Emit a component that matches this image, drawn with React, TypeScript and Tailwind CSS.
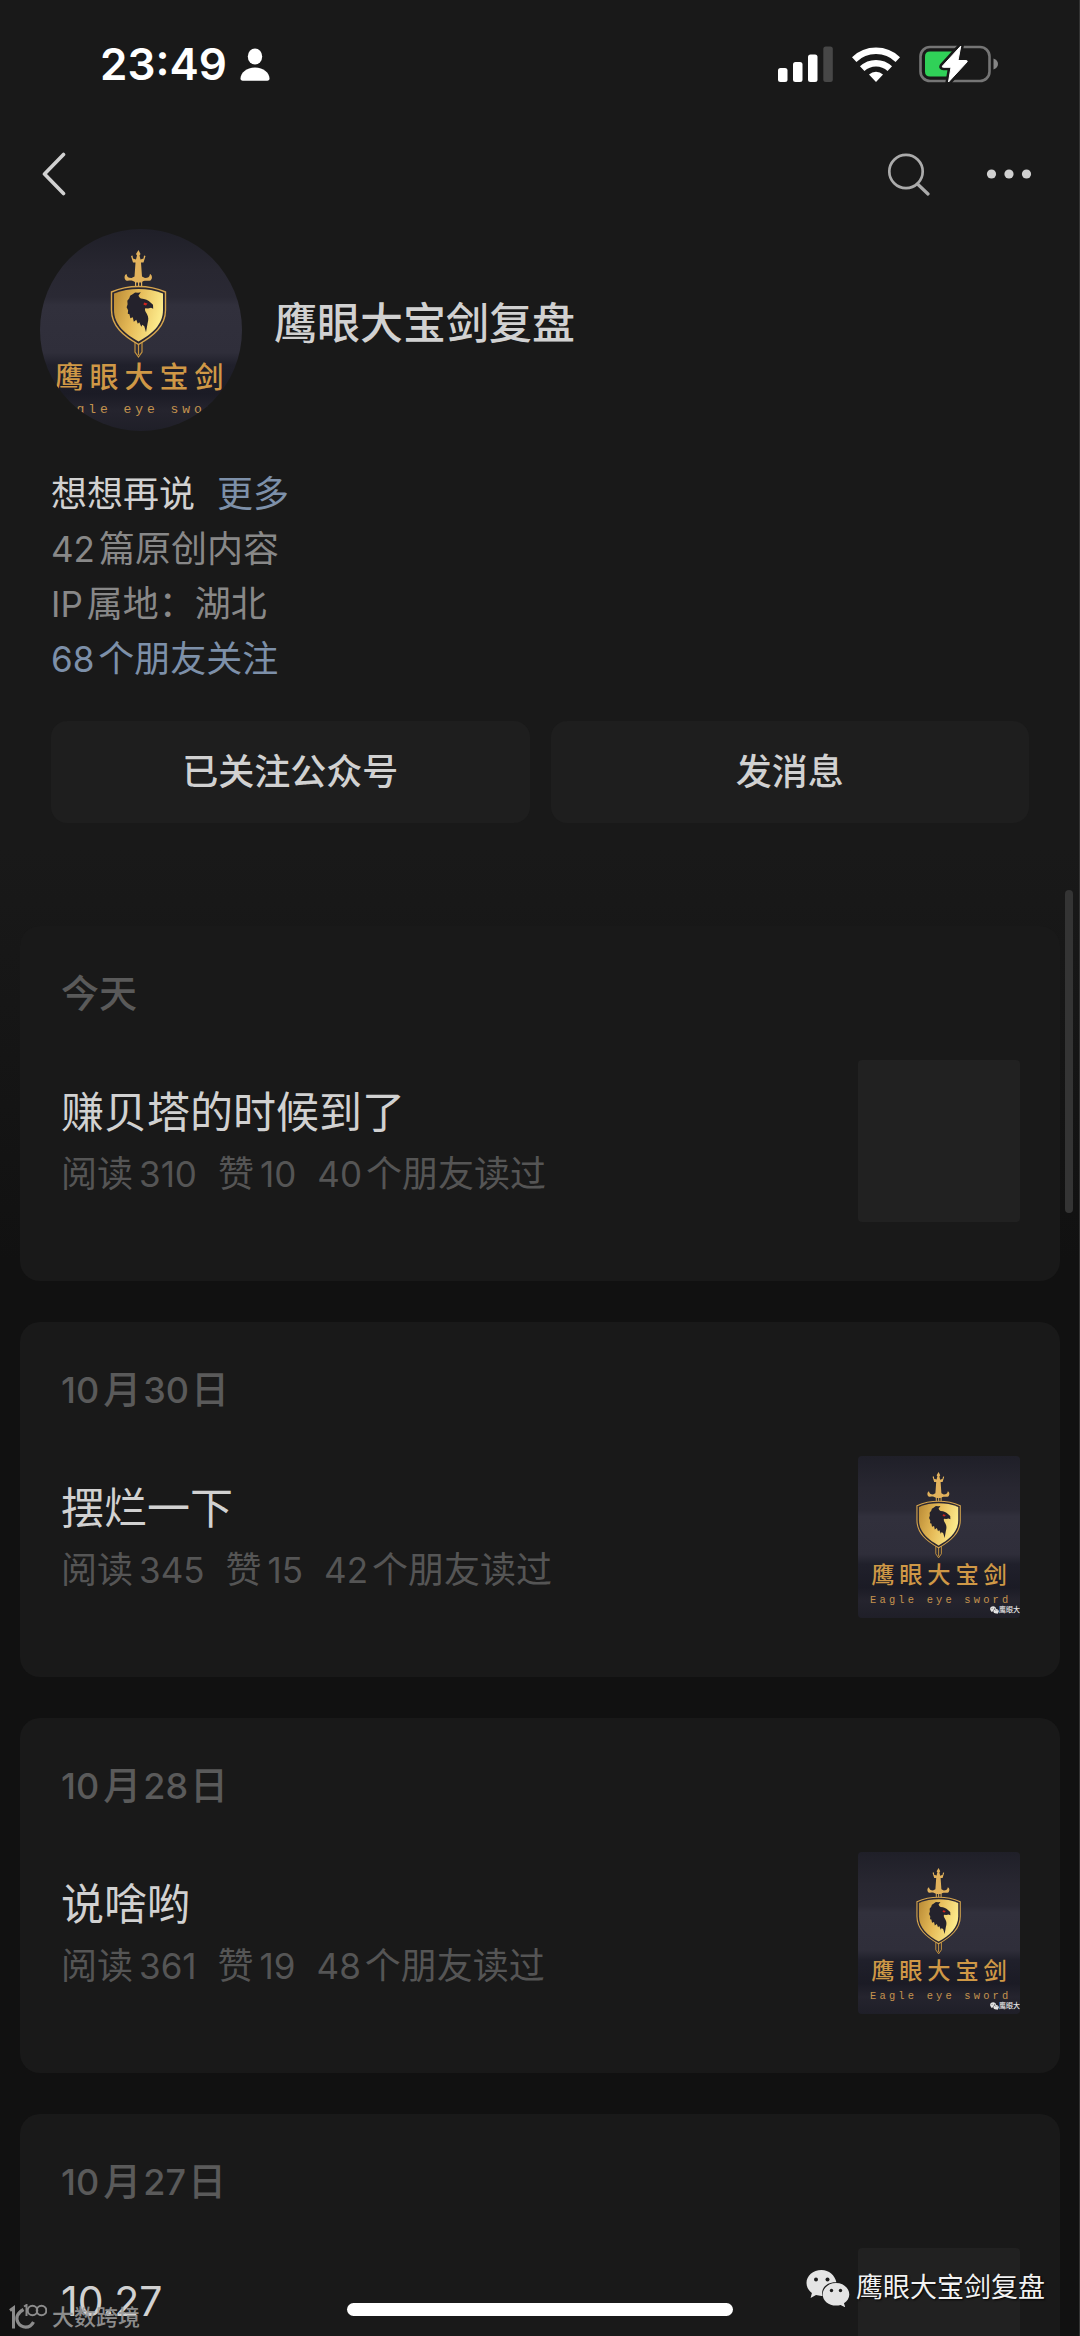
import { Fragment, type ReactNode } from "react";

type Post = {
  date: ReactNode;
  title: ReactNode;
  reads: number;
  likes: number;
  friends: number;
  cover: boolean;
};

function Num({ children }: { children: ReactNode }) {
  return <span className="text-[35px] leading-none">{children}</span>;
}

function DateLabel({ month, day }: { month: number; day: number }) {
  return (
    <>
      <span className="mr-1 text-[36px] leading-none">{month}</span>月
      <span className="mx-0.5 text-[36px] leading-none">{day}</span>日
    </>
  );
}

const posts: Post[] = [
  { date: "今天", title: "赚贝塔的时候到了", reads: 310, likes: 10, friends: 40, cover: false },
  { date: <DateLabel month={10} day={30} />, title: "摆烂一下", reads: 345, likes: 15, friends: 42, cover: true },
  { date: <DateLabel month={10} day={28} />, title: "说啥哟", reads: 361, likes: 19, friends: 48, cover: true },
  {
    date: <DateLabel month={10} day={27} />,
    title: <span className="text-[41px] leading-none">10.27</span>,
    reads: 352,
    likes: 14,
    friends: 45,
    cover: false,
  },
];

function WechatMark({ className }: { className: string }) {
  return (
    <svg viewBox="0 0 44 38" className={className} aria-hidden="true">
      <path
        fill="#e4e4e4"
        d="M15.5 1C7 1 .5 6.800.5 14c0 4 2 7.500 5.400 10L4.600 29l5.400-2.900c1.800.5 3.600.8 5.500.8h1C14.500 19 21 12.700 30.400 13.200 28.900 6.300 23 1 15.500 1Z"
      />
      <path
        fill="#e4e4e4"
        d="M43.300 25.400c0-6.300-6-11.400-13.300-11.400s-13.300 5.100-13.300 11.400S22.700 36.600 30 36.600c1.600 0 3.200-.2 4.600-.7l4.600 2.400-1.200-4.100c3.200-2.100 5.300-5.300 5.300-8.800Z"
      />
      <g fill="#1c1c1c">
        <circle cx="10" cy="10.500" r="2" />
        <circle cx="21.500" cy="10.500" r="2" />
        <circle cx="25.500" cy="21.500" r="1.700" />
        <circle cx="34.500" cy="21.500" r="1.700" />
      </g>
    </svg>
  );
}

function BrandArt({ className, id, viewBox }: { className: string; id: string; viewBox: string }) {
  return (
    <svg viewBox={viewBox} className={className} role="img" aria-label="鹰眼大宝剑">
      <defs>
        <linearGradient id={`${id}-night`} x1="0" y1="0" x2="0" y2="1">
          <stop offset="0" stopColor="#1f1f28" />
          <stop offset="0.2" stopColor="#282731" />
          <stop offset="0.33" stopColor="#2a2934" />
          <stop offset="0.37" stopColor="#31303c" />
          <stop offset="0.6" stopColor="#2f2e3a" />
          <stop offset="0.66" stopColor="#20202b" />
          <stop offset="0.8" stopColor="#1b1b25" />
          <stop offset="0.88" stopColor="#25242e" />
          <stop offset="1" stopColor="#1e1e27" />
        </linearGradient>
        <linearGradient id={`${id}-gold`} x1="0" y1="0" x2="1" y2="0.3">
          <stop offset="0" stopColor="#b98a35" />
          <stop offset="0.5" stopColor="#e6bb58" />
          <stop offset="1" stopColor="#fbe98a" />
        </linearGradient>
      </defs>
      <rect x="-4" width="210" height="206" fill={`url(#${id}-night)`} />
      <g fill="#e2b25c">
        <path d="M98.500 21l2 4-1 1.500 1 4 3-1 .5-3 1.500.5-2 6.500h-2.500l1 14 3 1.500c3 0 4.500-1 5-4 2.500 1 2.500 5 .5 6.500-2 .8-4-.3-7 .6l-2.500 1.400h-5L93 52c-3-.9-5 .2-7-.6-2-1.500-2-5.500.5-6.500.5 3 2 4 5 4l3-1.500 1-14H93l-2-6.500 1.500-.5.5 3 3 1 1-4-1-1.500Z" />
        <path d="M95 52h1.200v6H95zM98 52h1.200v6H98zM101 52h1.200v6H101z" />
      </g>
      <path
        d="M95 112v11l3.500 5 3.500-5v-11M98.500 114v12"
        fill="none"
        stroke="#c4933f"
        strokeWidth="1.200"
      />
      <path
        d="M98.500 57.500c9 0 18 1.500 27 5.500v18c0 16-12 26-27 34.500-15-8.500-27-18.500-27-34.500V63c9-4 18-5.500 27-5.500Z"
        fill="#2a2732"
        stroke="#d6a54e"
        strokeWidth="1.400"
      />
      <path
        d="M98.500 60c8.500 0 16.500 1.300 24.500 4.500v16.500c0 14.500-11 24-24.500 31.500C85 105 74 95.500 74 81V64.500C82 61.300 90 60 98.500 60Z"
        fill={`url(#${id}-gold)`}
      />
      <path
        d="M98.500 66.500c.5 1.500 1.200 2.400 2.500 3 4 .3 7.500 1.800 9.500 4l2.500 2.300.2 4-2.200-1-3 .8-2.800-.3c-.7 2 .3 3.500 1.600 5.500 2 3.500 1.700 6 .8 9.500l-1.600 9-1.700-6-2-1.500-1 2-2-4.500-1.500 1.500-1.500-4-2.500 2-1-4.500-2.500 1-.8-4-1.700-.5.3-3.500-1.500-3 1-3-.3-3.500 2-2.500.8-2.500 2.500-1.500 2.500-1.800 3 .3 2.700-.6Z"
        fill="#24222c"
      />
      <path d="M104 73.500l3.500 1-1.500 2-2.500-.8Z" fill="#d0241d" />
      <g fill="#cf9846" fontFamily="'Noto Sans CJK SC', sans-serif" fontSize="29" fontWeight="500">
        {[..."鹰眼大宝剑"].map((ch, i) => (
          <text key={i} x={29 + i * 35} y="159" textAnchor="middle">
            {ch}
          </text>
        ))}
      </g>
      <g fill="#c4934e" fontFamily="'Liberation Mono', monospace" fontSize="13">
        {[..."Eagle eye sword"].map((ch, i) => (
          <Fragment key={i}>
            {ch !== " " && (
              <text x={17 + i * 11.75} y="184" textAnchor="middle">
                {ch}
              </text>
            )}
          </Fragment>
        ))}
      </g>
    </svg>
  );
}

function StatusBar() {
  return (
    <div className="flex h-32 items-center justify-between pr-[81px] pl-[100px]">
      <div className="flex items-center gap-[13px]">
        <time className="text-[44px] leading-none font-semibold text-white">23:49</time>
        <svg viewBox="0 0 30 33" className="h-[33px] w-[30px] fill-white" aria-hidden="true">
          <ellipse cx="15" cy="8.500" rx="7.200" ry="8" />
          <path d="M15 19.500c8.500 0 14.500 5.500 14.500 11 0 1.400-.8 2.200-2.200 2.200H2.700C1.300 32.700.5 31.900.5 30.500c0-5.500 6-11 14.500-11Z" />
        </svg>
      </div>
      <div className="flex items-center gap-[19px]">
        <svg viewBox="0 0 55 36" className="h-9 w-[55px] fill-white" aria-hidden="true">
          <rect x="0" y="22" width="9.500" height="14" rx="2.500" />
          <rect x="15" y="16" width="9.500" height="20" rx="2.500" />
          <rect x="30" y="8.500" width="9.500" height="27.500" rx="2.500" />
          <rect x="45.300" y="0.500" width="9.500" height="35.500" rx="2.500" fill="#474747" />
        </svg>
        <svg viewBox="0 0 48 36" className="h-9 w-12" aria-hidden="true">
          <path d="M24 36l-7-7.500a10.500 10.500 0 0 1 14 0Z" fill="#fff" />
          <path d="M10.200 22.700a20 20 0 0 1 27.600 0" fill="none" stroke="#fff" strokeWidth="6.500" />
          <path d="M2.200 13.600a31.500 31.500 0 0 1 43.600 0" fill="none" stroke="#fff" strokeWidth="6.500" />
        </svg>
        <svg viewBox="0 0 80 40" className="h-10 w-20" aria-hidden="true">
          <rect x="1.500" y="3" width="69" height="34" rx="9.500" fill="none" stroke="#757575" strokeWidth="2.600" />
          <path d="M74.500 14.500c3 1 4.500 3.200 4.500 5.500s-1.500 4.500-4.500 5.500Z" fill="#858585" />
          <path d="M11 7.500h22v25H11q-5 0-5-5v-15q0-5 5-5Z" fill="#30d158" />
          <path
            d="M41.800 2L23.500 22q-.8 1.300.8 1.300h7.700L29.500 38 48 18q.8-1.500-.8-1.500h-8.200Z"
            fill="#fff"
            stroke="#191919"
            strokeWidth="6"
            strokeLinejoin="round"
          />
          <path
            d="M41.800 2L23.500 22q-.8 1.300.8 1.300h7.700L29.500 38 48 18q.8-1.500-.8-1.500h-8.200Z"
            fill="#fff"
            stroke="#fff"
            strokeWidth="1"
            strokeLinejoin="round"
          />
        </svg>
      </div>
    </div>
  );
}

function NavBar() {
  return (
    <nav className="flex h-[92px] items-center justify-between pr-[47px] pl-10">
      <button type="button" aria-label="返回">
        <svg viewBox="0 0 26 44" className="h-11 w-[26px]" aria-hidden="true">
          <path d="M23.500 2.500L4.500 22l19 19.500" fill="none" stroke="#d1d1d1" strokeWidth="3.600" strokeLinecap="round" strokeLinejoin="round" />
        </svg>
      </button>
      <div className="flex items-center gap-[55px]">
        <button type="button" aria-label="搜索">
          <svg viewBox="0 0 44 44" className="size-11" fill="none" stroke="#ababab" strokeWidth="2.700" strokeLinecap="round" aria-hidden="true">
            <circle cx="20" cy="19.500" r="16.700" />
            <path d="M31.500 32l10.500 10" strokeWidth="3.200" />
          </svg>
        </button>
        <button type="button" aria-label="更多操作">
          <svg viewBox="0 0 48 44" className="h-11 w-12 fill-[#d1d1d1]" aria-hidden="true">
            <circle cx="6.500" cy="22" r="4.600" />
            <circle cx="24" cy="22" r="4.600" />
            <circle cx="41.500" cy="22" r="4.600" />
          </svg>
        </button>
      </div>
    </nav>
  );
}

function PostCard({ post, index }: { post: Post; index: number }) {
  return (
    <article className="rounded-[20px] bg-[#191919] pt-[42px] pr-10 pb-[59px] pl-[41px]">
      <h2 className="h-[50px] text-[38px] leading-[50px] font-medium text-[#5a5a5a]">{post.date}</h2>
      <div className="mt-[42px] flex h-[162px] items-start justify-between">
        <div className="pt-[21px]">
          <h3 className="h-[62px] text-[43px] leading-[62px] text-[#d1d1d1]">{post.title}</h3>
          <p className="flex h-[62px] gap-[21px] text-[36px] leading-[62px] text-[#555]">
            <span className="flex items-baseline gap-[6px]">
              阅读<Num>{post.reads}</Num>
            </span>
            <span className="flex items-baseline gap-[6px]">
              赞<Num>{post.likes}</Num>
            </span>
            <span className="flex items-baseline gap-1">
              <Num>{post.friends}</Num>个朋友读过
            </span>
          </p>
        </div>
        {post.cover ? (
          <div className="relative size-[162px] overflow-hidden rounded">
            <BrandArt className="size-full" id={`cover-${index}`} viewBox="-2 1 202 202" />
            <div className="absolute right-0 bottom-1 flex items-center text-[7px] leading-[8px] font-medium whitespace-nowrap text-[#e4e4e4]">
              <WechatMark className="h-2 w-[9px] shrink-0" />
              鹰眼大
            </div>
          </div>
        ) : (
          <div className="size-[162px] rounded bg-[#212121]" />
        )}
      </div>
    </article>
  );
}

export default function App() {
  return (
    <div className="relative h-screen overflow-hidden bg-[#111] bg-[linear-gradient(#191919_850px,#111_1260px)] font-[Inter,'Noto_Sans_CJK_SC',sans-serif]">
      <StatusBar />
      <NavBar />

      <header>
        <div className="flex items-center gap-8 pt-[9px] pl-10">
          <BrandArt className="size-[202px] rounded-full" id="avatar" viewBox="0 0 202 202" />
          <h1 className="pb-[14px] text-[43px] leading-[60px] font-medium text-[#d1d1d1]">鹰眼大宝剑复盘</h1>
        </div>
        <div className="mt-9 px-[51px] text-[36px] leading-[55px] text-[#888]">
          <p className="flex h-[55px] gap-[22px] text-[#d1d1d1]">
            想想再说
            <a href="#more" className="text-[#7d90a9]">
              更多
            </a>
          </p>
          <p className="flex h-[55px] items-baseline gap-1">
            <Num>42</Num>篇原创内容
          </p>
          <p className="flex h-[55px] items-baseline gap-1">
            <Num>IP</Num>属地：湖北
          </p>
          <a href="#friends" className="flex h-[55px] items-baseline gap-1 text-[#7d90a9]">
            <Num>68</Num>个朋友关注
          </a>
        </div>
        <div className="mt-[34px] grid grid-cols-2 gap-[21px] px-[51px] text-[36px] font-medium text-[#d1d1d1]">
          <button type="button" className="h-[102px] rounded-2xl bg-[#1e1e1e]">
            已关注公众号
          </button>
          <button type="button" className="h-[102px] rounded-2xl bg-[#1e1e1e]">
            发消息
          </button>
        </div>
      </header>

      <main className="mt-[103px] flex flex-col gap-[41px] px-5">
        {posts.map((post, i) => (
          <PostCard key={i} post={post} index={i} />
        ))}
      </main>

      <div className="absolute top-[890px] right-[7px] h-[323px] w-2 rounded-full bg-[#343434]" />
      <div className="absolute inset-y-0 right-0 w-px bg-[#333]" />

      <div className="absolute bottom-5 left-1/2 h-[13px] w-[386px] -translate-x-1/2 rounded-full bg-white" />

      <div className="absolute bottom-[5px] left-[9px] flex items-center gap-[5px] text-[22px] leading-[28px] font-medium text-[#999] opacity-90">
        <svg viewBox="0 0 38 26" className="h-[26px] w-[38px]" fill="none" stroke="currentColor" aria-hidden="true">
          <path d="M1 6.500L4.500 4v20.500" strokeWidth="3" />
          <path d="M14.500 5.500C8 9 6.500 14 9 18.500c3.500 6 12 6.500 15.500-.5" strokeWidth="3.200" />
          <path d="M15 2.500L17.500 1v11" strokeWidth="2" />
          <circle cx="23.500" cy="6.500" r="4.800" strokeWidth="2" />
          <circle cx="32.500" cy="6.500" r="4.800" strokeWidth="2" />
        </svg>
        大数跨境
      </div>

      <div className="absolute right-[35px] bottom-[28px] flex items-center gap-[6px] text-[27px] leading-[40px] text-[#f2f2f2] [text-shadow:1px_1px_2px_#000]">
        <WechatMark className="h-[38px] w-11" />
        鹰眼大宝剑复盘
      </div>
    </div>
  );
}
